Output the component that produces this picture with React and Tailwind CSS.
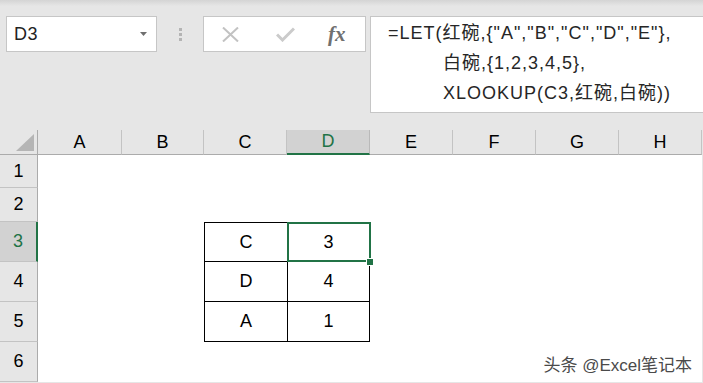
const cols = [
  { label: 'A', w: 'w-[84px]' },
  { label: 'B', w: 'w-[82px]' },
  { label: 'C', w: 'w-[83px]' },
  { label: 'D', w: 'w-[83px]' },
  { label: 'E', w: 'w-[83px]' },
  { label: 'F', w: 'w-[83px]' },
  { label: 'G', w: 'w-[83px]' },
  { label: 'H', w: 'w-[83px]' },
];

const rows = [
  { n: 1, h: 'h-[33px]', cells: {} },
  { n: 2, h: 'h-[34px]', cells: {} },
  { n: 3, h: 'h-[40px]', cells: { C: 'C', D: '3' } },
  { n: 4, h: 'h-[40px]', cells: { C: 'D', D: '4' } },
  { n: 5, h: 'h-[40px]', cells: { C: 'A', D: '1' } },
  { n: 6, h: 'h-[40px]', cells: {} },
];

const formula = [
  '=LET(红碗,{"A","B","C","D","E"},',
  '白碗,{1,2,3,4,5},',
  'XLOOKUP(C3,红碗,白碗))',
];

function Cell({ col, row }) {
  const inTable = row.n >= 3 && row.n <= 5;
  const isC = col.label === 'C';
  const isD = col.label === 'D';
  const bordered = inTable && (isC || isD);
  const selected = row.n === 3 && isD;

  let cls = `${col.w} h-full shrink-0 bg-white flex items-center justify-center text-[18px] text-black`;
  if (bordered) {
    cls += ' border-b border-black';
    if (row.n === 3) cls += ' border-t';
    if (isC) cls += ' border-l';
    if (isD) cls += ' border-l border-r';
  }

  return (
    <div className={selected ? cls + ' relative' : cls}>
      {row.cells[col.label]}
      {selected && (
        <>
          <div className="absolute -left-px -top-px -right-[2px] -bottom-px border-2 border-[#217346]" />
          <div className="absolute -right-[5px] -bottom-[5px] w-[8px] h-[8px] bg-[#217346] border border-white" />
        </>
      )}
    </div>
  );
}

export default function App() {
  return (
    <div className="w-[703px] h-[383px] overflow-hidden bg-[#e6e6e6] relative font-['Liberation_Sans','Noto_Sans_CJK_SC',sans-serif]">
      <div className="h-[6px] bg-gradient-to-b from-[#d4d4d4] to-[#e6e6e6]" />

      {/* formula bar */}
      <div className="flex items-start pt-[10px] pl-[6px] h-[124px]">
        <div className="w-[151px] h-[36px] shrink-0 bg-white border border-[#c6c6c6] flex items-center justify-between pl-[7px] pr-[9px]">
          <span className="text-[18px] text-[#222] tracking-[0.5px]">D3</span>
          <svg width="7" height="4" viewBox="0 0 7 4"><path d="M0 0h7L3.5 4z" fill="#6f6f6f" /></svg>
        </div>
        <div className="w-[46px] h-[36px] shrink-0 flex flex-col items-center justify-center gap-[2px]">
          <div className="w-[3px] h-[3px] bg-[#b4b4b4]" />
          <div className="w-[3px] h-[3px] bg-[#b4b4b4]" />
          <div className="w-[3px] h-[3px] bg-[#b4b4b4]" />
        </div>
        <div className="w-[163px] h-[36px] shrink-0 bg-white border border-[#c6c6c6] flex items-center pl-[18px]">
          <svg width="17" height="15" viewBox="0 0 17 15">
            <path d="M1 0.5L16 14.5M16 0.5L1 14.5" stroke="#c2c2c2" strokeWidth="2" />
          </svg>
          <svg className="ml-[37px]" width="19" height="15" viewBox="0 0 19 15">
            <path d="M1 7.5L6.5 13L18 1.5" stroke="#cbcbcb" strokeWidth="3" fill="none" />
          </svg>
          <span className="ml-[33px] font-['Liberation_Serif',serif] italic font-bold text-[21px] leading-none text-[#707070]">fx</span>
        </div>
        <div className="ml-[4px] -mr-[2px] flex-1 h-[97px] bg-white border border-[#c6c6c6] pl-[17px] pt-[1px] text-[18px] leading-[30px] text-[#262626] tracking-[1px] whitespace-nowrap">
          <div>{formula[0]}</div>
          <div className="pl-[55px]">{formula[1]}</div>
          <div className="pl-[55px]">{formula[2]}</div>
        </div>
      </div>

      {/* column headers */}
      <div className="flex h-[25px]">
        <div className="w-[38px] shrink-0 h-full border-r border-b border-[#ababab] flex items-end justify-end pr-[3px] pb-[3px]">
          <svg width="18" height="17" viewBox="0 0 18 17"><path d="M18 0V17H0z" fill="#b5b5b5" /></svg>
        </div>
        {cols.map(c =>
          c.label === 'D' ? (
            <div key={c.label} className={`${c.w} shrink-0 h-full bg-[#d2d2d2] border-r border-[#b9b9b9] border-b-2 border-b-[#217346] flex items-center justify-center text-[18px] text-[#217346]`}>
              {c.label}
            </div>
          ) : (
            <div key={c.label} className={`${c.w} shrink-0 h-full border-r border-[#c3c3c3] border-b border-b-[#ababab] flex items-center justify-center text-[18px] text-black`}>
              {c.label}
            </div>
          )
        )}
      </div>

      {/* rows */}
      {rows.map(r => (
        <div key={r.n} className={`flex ${r.h}`}>
          {r.n === 3 ? (
            <div className="w-[38px] shrink-0 h-full bg-[#d2d2d2] border-b border-[#c3c3c3] border-r-2 border-r-[#217346] flex items-center justify-center text-[18px] text-[#217346]">
              {r.n}
            </div>
          ) : (
            <div className="w-[38px] shrink-0 h-full border-b border-[#c3c3c3] border-r border-r-[#ababab] flex items-center justify-center text-[18px] text-black">
              {r.n}
            </div>
          )}
          {cols.map(c => <Cell key={c.label} col={c} row={r} />)}
        </div>
      ))}

      <div className="absolute right-[11px] bottom-[9px] text-[17px] leading-none text-[#4a4a4a] [text-shadow:0_0_2px_#fff]">
        头条 @Excel笔记本
      </div>
    </div>
  );
}
